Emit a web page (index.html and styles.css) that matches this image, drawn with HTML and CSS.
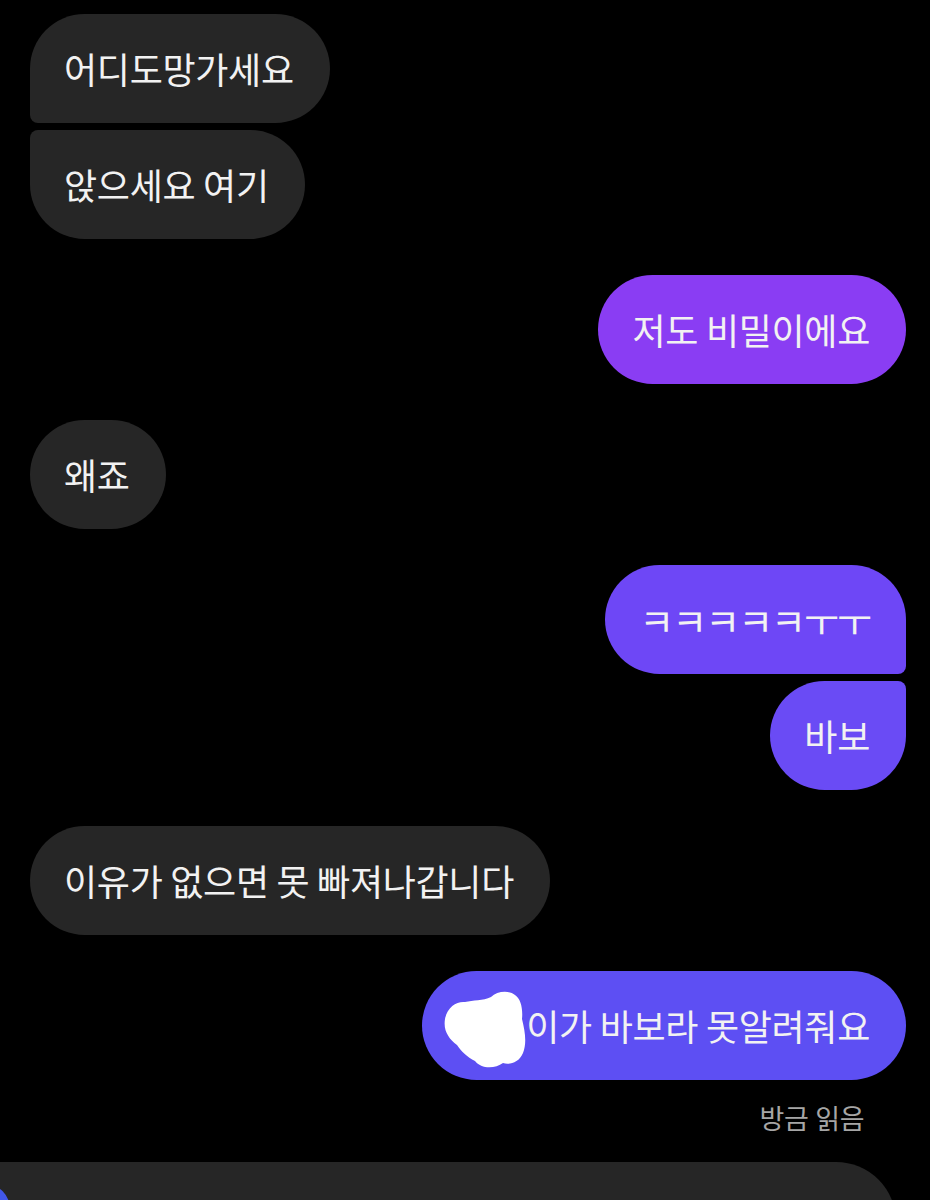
FILE: index.html
```html
<!DOCTYPE html>
<html lang="ko">
<head>
<meta charset="utf-8">
<link rel="stylesheet" href="styles.css">
</head>
<body>
<div class="chat">
  <div class="row in"><div class="bubble grey r-first">어디도망가세요</div></div>
  <div class="row in tight"><div class="bubble grey r-last">앉으세요 여기</div></div>

  <div class="row out"><div class="bubble purple1">저도 비밀이에요</div></div>

  <div class="row in"><div class="bubble grey">왜죠</div></div>

  <div class="row out"><div class="bubble purple2 o-first jamo">ㅋㅋㅋㅋㅋㅜㅜ</div></div>
  <div class="row out tight"><div class="bubble purple3 o-last">바보</div></div>

  <div class="row in"><div class="bubble grey">이유가 없으면 못 빠져나갑니다</div></div>

  <div class="row out"><div class="bubble purple4"><svg class="blob" viewBox="0 0 84 78" width="84" height="78"><path d="M2,28 C4,16 14,10 22,11 C30,9 40,10 48,6 C54,0 66,-1 72,4 C78,8 80,18 79,28 C82,40 84,52 80,62 C76,72 66,74 60,72 C52,78 38,78 32,70 C24,66 18,60 14,54 C6,48 0,40 2,28 Z" fill="#ffffff"/></svg><span>이가 바보라 못알려줘요</span></div></div>

  <div class="seen">방금 읽음</div>
</div>
<div class="composer"><span class="cam"></span></div>
</body>
</html>
```
FILE: styles.css
```css
html, body {
  margin: 0;
  padding: 0;
  background: #000;
  height: 1200px;
  overflow: hidden;
}
body {
  font-family: "Noto Sans CJK KR", "Noto Sans", sans-serif;
  color: #f2f2f2;
}
.chat {
  display: flex;
  flex-direction: column;
  padding: 14px 24px 0 30px;
}
.row {
  display: flex;
  margin-top: 36px;
}
.row:first-child { margin-top: 0; }
.row.tight { margin-top: 7px; }
.row.in { justify-content: flex-start; }
.row.out { justify-content: flex-end; }
.bubble {
  display: flex;
  align-items: center;
  height: 109px;
  box-sizing: border-box;
  padding: 0 36px 0 34px;
  border-radius: 54.5px;
  font-size: 36px;
  letter-spacing: -0.3px;
  word-spacing: -2px;
  line-height: 41px;
  white-space: nowrap;
}
.jamo {
  font-size: 38px;
  letter-spacing: -2px;
}
.grey { background: #262626; }
.purple1 { background: #8a3df3; }
.purple2 { background: #6e47f6; }
.purple3 { background: #6a4bf5; }
.purple4 { background: #5d4ff3; }
.r-first { border-bottom-left-radius: 8px; }
.r-last { border-top-left-radius: 8px; }
.o-first { border-bottom-right-radius: 8px; }
.o-last { border-top-right-radius: 8px; }
.blob {
  margin-left: -13px;
  margin-right: -1px;
  margin-top: 8px;
  flex: none;
}
.seen {
  align-self: flex-end;
  margin: 23px 42px 0 0;
  font-size: 27px;
  line-height: 30px;
  letter-spacing: -0.5px;
  color: #a6a6a6;
}
.composer {
  position: relative;
  margin-top: 29px;
  width: 896px;
  height: 80px;
  background: #262626;
  border-top-right-radius: 60px;
  overflow: hidden;
}
.cam {
  position: absolute;
  left: -40px;
  top: 22px;
  width: 50px;
  height: 50px;
  border-radius: 50%;
  background: #4257e8;
}
```
